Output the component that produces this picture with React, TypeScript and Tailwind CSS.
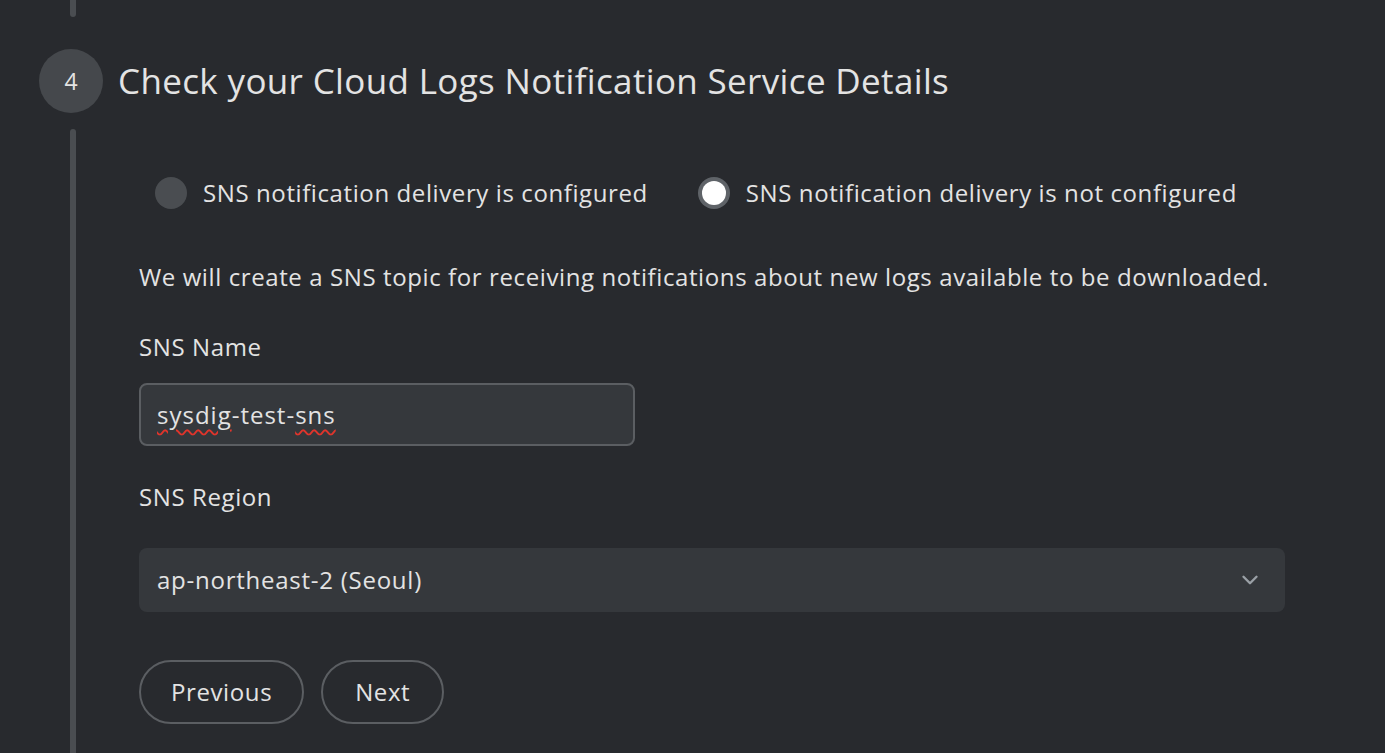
import { ChevronDown } from 'lucide-react';

export default function App() {
  return (
    <div
      className="h-[753px] w-[1385px] overflow-hidden bg-[#282a2e] text-[#e3e3e3] tracking-[0.6px]"
      style={{ fontFamily: '"Open Sans", Roboto, sans-serif' }}
    >
      <div className="flex flex-col pl-[39px]">
        {/* previous step connector */}
        <div className="ml-[31px] h-[17px] w-[6px] rounded-b-full bg-[#4a4d51]" />

        {/* Step header */}
        <div className="mt-[32px] flex items-center gap-[15px]">
          <div className="flex h-[64px] w-[64px] shrink-0 items-center justify-center rounded-full bg-[#45484c] text-[23px] tracking-normal text-[#e3e3e3]">
            4
          </div>
          <h1 className="text-[35px] leading-[40px] font-normal tracking-[0.35px] text-[#e3e3e3]">
            Check your Cloud Logs Notification Service Details
          </h1>
        </div>

        <div className="mt-[16px] flex">
          {/* connector line */}
          <div className="ml-[31px] h-[640px] w-[6px] shrink-0 rounded-t-full bg-[#4a4d51]" />

          {/* step body */}
          <div className="ml-[63px] flex flex-1 flex-col pr-[100px]">
            <div className="mt-[48px] ml-[16px] flex items-center gap-[50px]">
              <label className="flex items-center gap-[16px]">
                <span className="h-[32px] w-[32px] rounded-full bg-[#4a4d51]" />
                <span className="text-[24px] leading-[32px]">SNS notification delivery is configured</span>
              </label>
              <label className="flex items-center gap-[16px]">
                <span className="flex h-[32px] w-[32px] items-center justify-center rounded-full bg-[#5f6368]">
                  <span className="h-[24px] w-[24px] rounded-full bg-white" />
                </span>
                <span className="text-[24px] leading-[32px]">SNS notification delivery is not configured</span>
              </label>
            </div>

            <p className="mt-[52px] text-[24px] leading-[32px]">
              We will create a SNS topic for receiving notifications about new logs available to be downloaded.
            </p>

            <div className="mt-[38px] text-[24px] leading-[32px]">SNS Name</div>
            <div className="mt-[20px] flex h-[63px] w-[496px] items-center rounded-[8px] border-2 border-[#5b5e62] bg-[#35383c] px-[16px] text-[24px] tracking-[1px]">
              <span className="underline decoration-wavy decoration-[#e0342b] decoration-2 underline-offset-[5px]">sysdig</span>
              <span>-test-</span>
              <span className="underline decoration-wavy decoration-[#e0342b] decoration-2 underline-offset-[5px]">sns</span>
            </div>

            <div className="mt-[35px] text-[24px] leading-[32px]">SNS Region</div>
            <div className="mt-[35px] flex h-[64px] w-[1146px] items-center justify-between rounded-[8px] bg-[#35383c] pr-[22px] pl-[18px] text-[24px] tracking-[0.75px]">
              <span>ap-northeast-2 (Seoul)</span>
              <ChevronDown className="h-[26px] w-[26px] text-[#9aa0a6]" strokeWidth={2.2} />
            </div>

            <div className="mt-[48px] flex gap-[17px]">
              <button className="h-[64px] rounded-full border-2 border-[#5b5e62] px-[30px] text-[24px] text-[#e3e3e3]">
                Previous
              </button>
              <button className="h-[64px] rounded-full border-2 border-[#5b5e62] px-[32px] text-[24px] text-[#e3e3e3]">
                Next
              </button>
            </div>
          </div>
        </div>
      </div>
    </div>
  );
}
